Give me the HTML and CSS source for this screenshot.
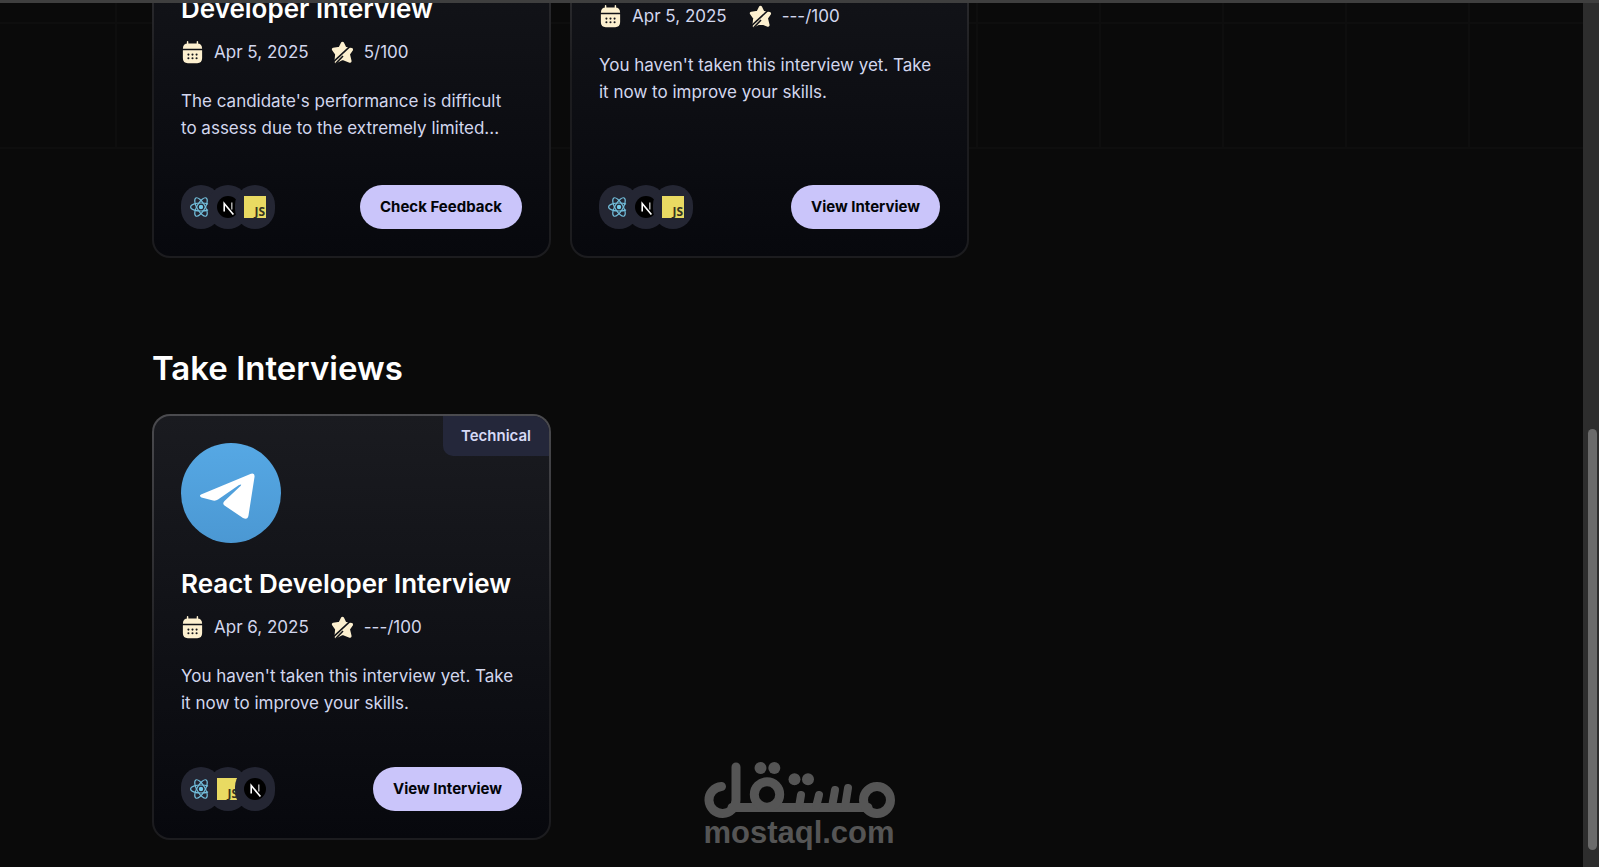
FILE: index.html
```
<!DOCTYPE html>
<html lang="en">
<head>
<meta charset="utf-8">
<title>Interviews</title>
<link rel="stylesheet" href="styles.css">
</head>
<body>
<svg class="defs" aria-hidden="true">
  <symbol id="calendar" viewBox="0 0 22 22">
    <path d="M6.300 0.800v3M15.700 0.800v3" stroke="#fdf0cf" stroke-width="1.400" stroke-linecap="round"/>
    <path d="M1.800 7.300C1.800 4 3.500 2.300 6.500 2.300h9c3 0 4.700 1.700 4.700 5z" fill="#fdf0cf"/>
    <path d="M1.800 8.800h18.400v7.700c0 3-1.700 4.700-4.700 4.700H6.500c-3 0-4.700-1.700-4.700-4.700z" fill="#fdf0cf"/>
    <g fill="#15161b"><circle cx="7.100" cy="13" r="1"/><circle cx="11" cy="13" r="1"/><circle cx="14.900" cy="13" r="1"/><circle cx="7.100" cy="16.500" r="1"/><circle cx="11" cy="16.500" r="1"/><circle cx="14.900" cy="16.500" r="1"/></g>
  </symbol>
  <symbol id="star" viewBox="0 0 22 22">
    <path d="M11 2.200 13.300 6.900 19.600 8.200 16.600 12.600 18.200 19.300 11 16.600 4.800 19.600 5.500 12.400 2.300 8 8.600 6.900Z" fill="#fdf0cf" stroke="#fdf0cf" stroke-width="3" stroke-linejoin="round"/>
    <path d="M18.200 5.200 2 20.200" stroke="#121318" stroke-width="1.500"/>
    <path d="M11.500 14.300 4.600 21.600" stroke="#121318" stroke-width="1.500"/>
  </symbol>
  <symbol id="react" viewBox="0 0 22 22">
    <g fill="none" stroke="#73bfdc" stroke-width="1.200"><ellipse cx="11" cy="11" rx="10.400" ry="4"/><ellipse cx="11" cy="11" rx="10.400" ry="4" transform="rotate(60 11 11)"/><ellipse cx="11" cy="11" rx="10.400" ry="4" transform="rotate(120 11 11)"/></g>
    <circle cx="11" cy="11" r="2.200" fill="#73cbea"/>
  </symbol>
  <symbol id="next" viewBox="0 0 22 22">
    <circle cx="11" cy="11" r="11" fill="#000"/>
    <path d="M7.200 15.500V7.500L16.400 18.600" fill="none" stroke="#fff" stroke-width="1.600"/>
    <path d="M14.800 6.600v7" stroke="#bbb" stroke-width="1.400"/>
  </symbol>
  <symbol id="js" viewBox="0 0 22 22">
    <path d="M0 0h22v22H0z" fill="#e9da62"/>
    <text class="js-text" x="21" y="20" text-anchor="end">JS</text>
  </symbol>
</svg>
<div class="window">
  <main class="page">
    <section class="cards">
      <article class="card tall">
        <div class="logo"></div>
        <h3 class="title double">Developer Interview</h3>
        <div class="meta">
          <span class="fact"><svg class="icon"><use href="#calendar"/></svg>Apr 5, 2025</span>
          <span class="fact"><svg class="icon"><use href="#star"/></svg>5/100</span>
        </div>
        <p class="text">The candidate's performance is difficult<br>to assess due to the extremely limited...</p>
        <footer class="foot">
          <div class="stack">
            <span class="tech"><svg><use href="#react"/></svg></span>
            <span class="tech"><svg><use href="#next"/></svg></span>
            <span class="tech"><svg><use href="#js"/></svg></span>
          </div>
          <button class="btn" type="button">Check Feedback</button>
        </footer>
      </article>
      <article class="card tall">
        <div class="logo"></div>
        <div class="title"></div>
        <div class="meta">
          <span class="fact"><svg class="icon"><use href="#calendar"/></svg>Apr 5, 2025</span>
          <span class="fact"><svg class="icon"><use href="#star"/></svg>---/100</span>
        </div>
        <p class="text">You haven't taken this interview yet. Take<br>it now to improve your skills.</p>
        <footer class="foot">
          <div class="stack">
            <span class="tech"><svg><use href="#react"/></svg></span>
            <span class="tech"><svg><use href="#next"/></svg></span>
            <span class="tech"><svg><use href="#js"/></svg></span>
          </div>
          <button class="btn" type="button">View Interview</button>
        </footer>
      </article>
    </section>
    <h2 class="heading">Take Interviews</h2>
    <section class="cards">
      <article class="card">
        <span class="badge">Technical</span>
        <svg class="logo" viewBox="0 0 100 100" role="img" aria-label="Telegram">
          <defs><linearGradient id="sky" x1="0" y1="0" x2="0" y2="1"><stop offset="0" stop-color="#56a8e4"/><stop offset="1" stop-color="#4b98d3"/></linearGradient></defs>
          <circle cx="50" cy="50" r="50" fill="url(#sky)"/>
          <path d="M20 51.500 70 30.800Q74 29.500 73.500 34L67.500 72.500Q66.500 77.500 62 75L43.500 62.500Q41 60.500 43.500 58L59.500 43Q61.500 40.500 58 42L37 56.500Q35 58 32 57.500L20.500 54.500Q17.500 53 20 51.500Z" fill="#fff"/>
        </svg>
        <h3 class="title">React Developer Interview</h3>
        <div class="meta">
          <span class="fact"><svg class="icon"><use href="#calendar"/></svg>Apr 6, 2025</span>
          <span class="fact"><svg class="icon"><use href="#star"/></svg>---/100</span>
        </div>
        <p class="text">You haven't taken this interview yet. Take<br>it now to improve your skills.</p>
        <footer class="foot">
          <div class="stack">
            <span class="tech"><svg><use href="#react"/></svg></span>
            <span class="tech"><svg><use href="#js"/></svg></span>
            <span class="tech"><svg><use href="#next"/></svg></span>
          </div>
          <button class="btn" type="button">View Interview</button>
        </footer>
      </article>
    </section>
  </main>
  <div class="scrollbar"><div class="thumb"></div></div>
</div>
<svg class="watermark" viewBox="0 0 196 90" role="img" aria-label="mostaql.com">
  <g fill="none" stroke="#555" stroke-width="9" stroke-linecap="round">
    <path d="M19.500 21.500A13.500 13.500 0 1 0 34 35V2M30 42.500H166"/>
    <circle cx="65" cy="29.500" r="12.700"/>
    <circle cx="175" cy="35" r="13.500"/>
    <path d="M97 42 99 30M114 42 117 30M130 42 133 25M143 42 146 23" stroke-width="8"/>
  </g>
  <g fill="#555"><circle cx="58.500" cy="3" r="6"/><circle cx="72.300" cy="3" r="6"/><circle cx="92.500" cy="14.300" r="6"/><circle cx="106" cy="14.300" r="6"/></g>
  <text class="domain" x="97" y="78" text-anchor="middle">mostaql.com</text>
</svg>
</body>
</html>
```
FILE: styles.css
```
* { box-sizing: border-box; }
body {
  margin: 0;
  background: #0a0a0a;
  color: #fff;
  font-family: Inter, "Open Sans", sans-serif;
}
.defs { position: absolute; width: 0; height: 0; }
.window {
  display: flex;
  height: 100vh;
  border-top: 3px solid #3f3f3f;
  overflow: hidden;
}
.page {
  flex: 1;
  display: flex;
  flex-direction: column;
  justify-content: flex-end;
  padding: 0 196px 27px 152px;
  /* faint grid fading out below the first row */
  background:
    linear-gradient(transparent 146px, #0a0a0a 146px),
    repeating-linear-gradient(90deg, transparent 0 115px, #0e0e0e 115px 117px, transparent 117px 123px),
    linear-gradient(#0e0e0e, #0e0e0e) 0 19px / 100% 2px no-repeat,
    linear-gradient(#0e0e0e, #0e0e0e) 0 144px / 100% 2px no-repeat;
}
.cards {
  flex: none;
  display: grid;
  grid-template-columns: repeat(3, 1fr);
  gap: 19px;
}
.card {
  position: relative;
  display: flex;
  flex-direction: column;
  min-height: 426px;
  padding: 27px;
  border: 2px solid transparent;
  border-radius: 18px;
  background:
    linear-gradient(#1a1b20, #07080d) padding-box,
    linear-gradient(#4b4b4f, #1c1c1f 60%) border-box;
}
.tall { min-height: 455px; }
.logo { flex: none; width: 100px; height: 100px; }
.title {
  display: flex;
  align-items: flex-end;
  min-height: 36px;
  margin: 23px 0 0;
  font-size: 26px;
  line-height: 36px;
  font-weight: 600;
  white-space: nowrap;
}
.double { min-height: 72px; }
.meta {
  display: flex;
  gap: 22px;
  margin-top: 12px;
  color: #d3d7ee;
  font-size: 17px;
  line-height: 27px;
}
.fact { display: flex; align-items: center; gap: 10px; }
.icon { width: 23px; height: 23px; }
.text {
  margin: 22px 0 0;
  color: #d3d7ee;
  font-size: 17px;
  line-height: 27px;
  white-space: nowrap;
}
.foot {
  display: flex;
  justify-content: space-between;
  align-items: center;
  margin-top: auto;
}
.stack { display: flex; }
.tech {
  display: grid;
  place-items: center;
  width: 40px;
  height: 44px;
  border-radius: 20px;
  background: #242633;
}
.tech + .tech { margin-left: -13px; }
.tech svg { width: 22px; height: 22px; }
.js-text { fill: #35331f; font: 700 12px "Open Sans", sans-serif; }
.btn {
  height: 44px;
  padding: 0 20px;
  border: 0;
  border-radius: 22px;
  background: #cac5fa;
  color: #020408;
  font: 700 15px/24px Inter, sans-serif;
}
.badge {
  position: absolute;
  top: 0;
  right: 0;
  padding: 8px 18px;
  border-radius: 0 16px 0 10px;
  background: #24273a;
  color: #d6d9f5;
  font-size: 15px;
  line-height: 24px;
  font-weight: 600;
}
.heading {
  margin: 86px 0 22px;
  font-size: 33px;
  line-height: 48px;
  font-weight: 600;
}
.scrollbar {
  width: 16px;
  padding: 426px 2px 17px 5px;
  background: #2d2d2d;
}
.thumb { height: 100%; border-radius: 5px; background: #6b6b6b; }
.watermark {
  position: absolute;
  left: 50%;
  bottom: 12px;
  width: 196px;
  height: 90px;
  margin-left: -98px;
  overflow: visible;
}
.domain { fill: #555; font: 700 31px "Liberation Sans", sans-serif; }
```
